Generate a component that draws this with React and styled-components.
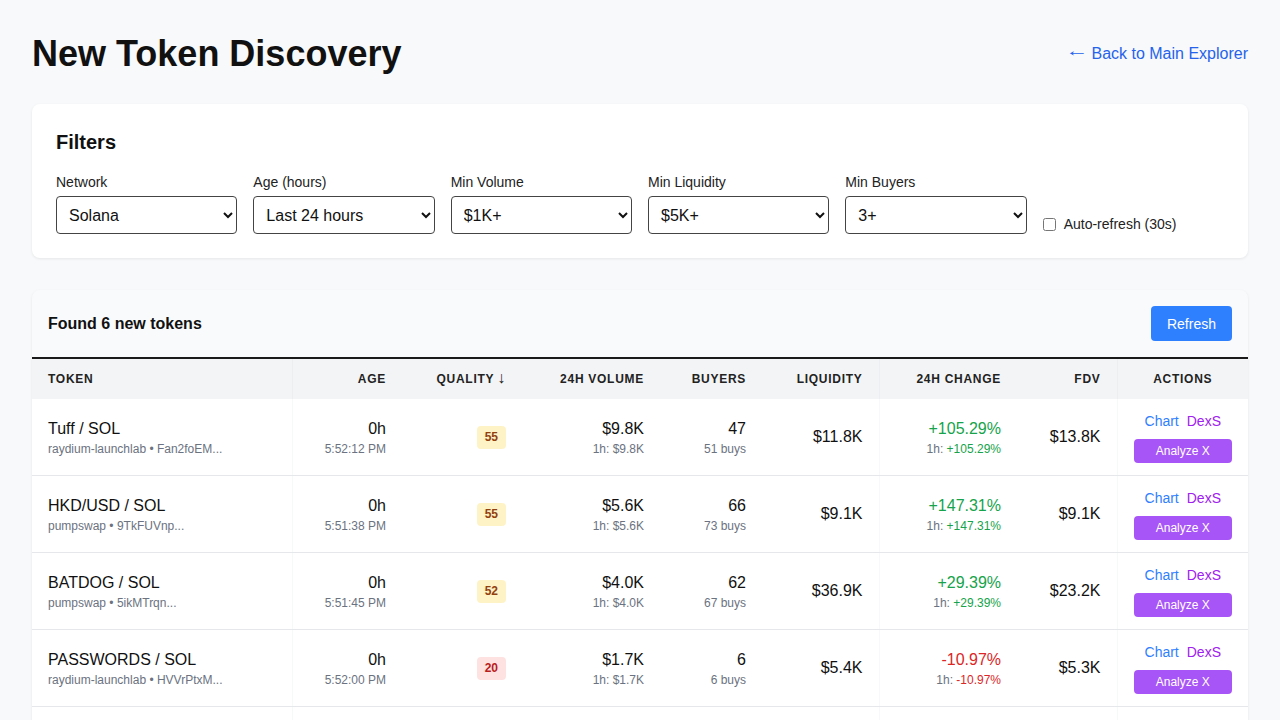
import React from "react";
import styled, { createGlobalStyle } from "styled-components";

const GlobalStyle = createGlobalStyle`
  body {
    margin: 0;
    background: #f8f9fb;
    font-family: "Liberation Sans", Arial, sans-serif;
    color: #111;
  }
`;

const Page = styled.div`
  padding: 32px;
`;

const Header = styled.div`
  display: flex;
  align-items: center;
  justify-content: space-between;
  margin-bottom: 28px;
`;

const Title = styled.h1`
  margin: 0;
  font-size: 36px;
  line-height: 44px;
  font-weight: 700;
  color: #111;
`;

const BackLink = styled.a`
  color: #2563eb;
  font-size: 16px;
  text-decoration: none;
  display: flex;
  align-items: center;
`;

const Arrow = styled.span`
  font-size: 16px;
  line-height: 16px;
  transform: translateY(-3px) scaleX(1.45);
  display: inline-block;
  margin-right: 6px;
`;

const Card = styled.div`
  background: #fff;
  border-radius: 8px;
  box-shadow: 0 1px 3px rgba(0, 0, 0, 0.08);
  padding: 24px;
  margin-bottom: 32px;
`;

const CardTitle = styled.h2`
  margin: 0 0 16px;
  font-size: 20px;
  line-height: 28px;
  font-weight: 700;
`;

const FilterGrid = styled.div`
  display: grid;
  grid-template-columns: repeat(6, 1fr);
  gap: 16px;
  align-items: end;
`;

const Field = styled.label`
  display: flex;
  flex-direction: column;
  gap: 4px;
  font-size: 14px;
  line-height: 20px;
  color: #222;
`;

const Select = styled.select`
  height: 38px;
  padding: 0 8px;
  font-family: inherit;
  font-size: 16px;
  color: #111;
  background: #fff;
  border: 1px solid #444;
  border-radius: 4px;
`;

const Check = styled.label`
  display: flex;
  align-items: center;
  gap: 8px;
  font-size: 14px;
  line-height: 20px;
  color: #222;
  input { margin: 0; width: 13px; height: 13px; }
`;

const Results = styled.div`
  background: #f9fafb;
  border-radius: 8px;
  box-shadow: 0 1px 3px rgba(0, 0, 0, 0.08);
  overflow: hidden;
`;

const ResultsHead = styled.div`
  display: flex;
  align-items: center;
  justify-content: space-between;
  padding: 16px;
  border-bottom: 2px solid #1a1a1a;
`;

const ResultsTitle = styled.h3`
  margin: 0;
  font-size: 16px;
  font-weight: 700;
`;

const RefreshButton = styled.button`
  background: #2f80ff;
  color: #fff;
  border: none;
  border-radius: 4px;
  font-family: inherit;
  font-size: 14px;
  height: 35px;
  padding: 0 16px;
`;

const Table = styled.table`
  width: 100%;
  border-collapse: collapse;
  table-layout: fixed;
`;

const Th = styled.th`
  background: #f3f4f6;
  height: 40px;
  padding: 0 16px;
  font-size: 12px;
  font-weight: 700;
  letter-spacing: 0.06em;
  text-transform: uppercase;
  color: #222;
  text-align: ${(p) => p.$align || "right"};
  border-left: ${(p) => (p.$sep ? "1px solid #eceef1" : "none")};
`;

const SortArrow = styled.span`
  font-size: 16px;
  line-height: 12px;
  font-weight: 400;
  margin-left: 3px;
`;

const Td = styled.td`
  background: #fff;
  padding: 12px 16px;
  text-align: ${(p) => p.$align || "right"};
  vertical-align: middle;
  border-bottom: 1px solid #e5e7eb;
  border-left: ${(p) => (p.$sep ? "1px solid #f7f8f9" : "none")};
  font-size: 16px;
`;

const Main = styled.div`
  font-size: 16px;
  line-height: 24px;
  color: ${(p) => p.$color || "#111"};
`;

const Sub = styled.div`
  font-size: 12px;
  line-height: 16px;
  color: #6b7280;
  white-space: nowrap;
`;

const Delta = styled.span`
  color: ${(p) => p.$color};
`;

const Badge = styled.span`
  display: inline-block;
  padding: 4px 8px;
  border-radius: 4px;
  font-size: 12px;
  line-height: 15px;
  font-weight: 700;
  background: ${(p) => (p.$low ? "#fee2e2" : "#fef3c7")};
  color: ${(p) => (p.$low ? "#b91c1c" : "#92400e")};
`;

const LinkRow = styled.div`
  display: flex;
  justify-content: center;
  gap: 8px;
  font-size: 14px;
  line-height: 20px;
  margin-bottom: 8px;
`;

const ActionLink = styled.a`
  color: ${(p) => p.$color};
  text-decoration: none;
`;

const AnalyzeButton = styled.button`
  display: block;
  width: 100%;
  height: 24px;
  background: #a855f7;
  color: #fff;
  border: none;
  border-radius: 4px;
  font-family: inherit;
  font-size: 12px;
`;

const columns = [
  { label: "Token", width: 260, align: "left" },
  { label: "Age", width: 110, sep: true },
  { label: "Quality", width: 120, sort: true },
  { label: "24h Volume", width: 138 },
  { label: "Buyers", width: 102 },
  { label: "Liquidity", width: 117 },
  { label: "24h Change", width: 138, sep: true },
  { label: "FDV", width: 100 },
  { label: "Actions", width: 131, align: "center", sep: true },
];

const tokens = [
  { name: "Tuff / SOL", dex: "raydium-launchlab", addr: "Fan2foEM...", time: "5:52:12 PM", q: 55, vol: "$9.8K", buyers: 47, buys: 51, liq: "$11.8K", change: "+105.29%", fdv: "$13.8K" },
  { name: "HKD/USD / SOL", dex: "pumpswap", addr: "9TkFUVnp...", time: "5:51:38 PM", q: 55, vol: "$5.6K", buyers: 66, buys: 73, liq: "$9.1K", change: "+147.31%", fdv: "$9.1K" },
  { name: "BATDOG / SOL", dex: "pumpswap", addr: "5ikMTrqn...", time: "5:51:45 PM", q: 52, vol: "$4.0K", buyers: 62, buys: 67, liq: "$36.9K", change: "+29.39%", fdv: "$23.2K" },
  { name: "PASSWORDS / SOL", dex: "raydium-launchlab", addr: "HVVrPtxM...", time: "5:52:00 PM", q: 20, vol: "$1.7K", buyers: 6, buys: 6, liq: "$5.4K", change: "-10.97%", fdv: "$5.3K" },
  { name: "GRIND / SOL", dex: "pumpswap", addr: "7qLmXcBv...", time: "5:51:20 PM", q: 18, vol: "$1.2K", buyers: 4, buys: 5, liq: "$6.2K", change: "-4.12%", fdv: "$6.0K" },
  { name: "ORBIT / SOL", dex: "raydium-launchlab", addr: "Bz4kQeTn...", time: "5:50:58 PM", q: 15, vol: "$1.1K", buyers: 3, buys: 4, liq: "$5.1K", change: "+2.05%", fdv: "$5.0K" },
];

const filters = [
  { label: "Network", value: "Solana" },
  { label: "Age (hours)", value: "Last 24 hours" },
  { label: "Min Volume", value: "$1K+" },
  { label: "Min Liquidity", value: "$5K+" },
  { label: "Min Buyers", value: "3+" },
];

export default function App() {
  return (
    <>
      <GlobalStyle />
      <Page>
        <Header>
          <Title>New Token Discovery</Title>
          <BackLink href="#">
            <Arrow>←</Arrow>Back to Main Explorer
          </BackLink>
        </Header>

        <Card>
          <CardTitle>Filters</CardTitle>
          <FilterGrid>
            {filters.map((f) => (
              <Field key={f.label}>
                {f.label}
                <Select defaultValue={f.value}>
                  <option>{f.value}</option>
                </Select>
              </Field>
            ))}
            <Check>
              <input type="checkbox" />
              Auto-refresh (30s)
            </Check>
          </FilterGrid>
        </Card>

        <Results>
          <ResultsHead>
            <ResultsTitle>Found 6 new tokens</ResultsTitle>
            <RefreshButton>Refresh</RefreshButton>
          </ResultsHead>
          <Table>
            <colgroup>
              {columns.map((c) => (
                <col key={c.label} style={{ width: c.width }} />
              ))}
            </colgroup>
            <thead>
              <tr>
                {columns.map((c) => (
                  <Th key={c.label} $align={c.align} $sep={c.sep}>
                    {c.label}
                    {c.sort && <SortArrow>↓</SortArrow>}
                  </Th>
                ))}
              </tr>
            </thead>
            <tbody>
              {tokens.map((t) => {
                const up = t.change.startsWith("+");
                const color = up ? "#16a34a" : "#dc2626";
                return (
                  <tr key={t.name}>
                    <Td $align="left">
                      <Main>{t.name}</Main>
                      <Sub>
                        {t.dex} • {t.addr}
                      </Sub>
                    </Td>
                    <Td $sep>
                      <Main>0h</Main>
                      <Sub>{t.time}</Sub>
                    </Td>
                    <Td>
                      <Badge $low={t.q < 40}>{t.q}</Badge>
                    </Td>
                    <Td>
                      <Main>{t.vol}</Main>
                      <Sub>1h: {t.vol}</Sub>
                    </Td>
                    <Td>
                      <Main>{t.buyers}</Main>
                      <Sub>{t.buys} buys</Sub>
                    </Td>
                    <Td>
                      <Main>{t.liq}</Main>
                    </Td>
                    <Td $sep>
                      <Main $color={color}>{t.change}</Main>
                      <Sub>
                        1h: <Delta $color={color}>{t.change}</Delta>
                      </Sub>
                    </Td>
                    <Td>
                      <Main>{t.fdv}</Main>
                    </Td>
                    <Td $sep>
                      <LinkRow>
                        <ActionLink href="#" $color="#2f80ff">Chart</ActionLink>
                        <ActionLink href="#" $color="#a020f0">DexS</ActionLink>
                      </LinkRow>
                      <AnalyzeButton>Analyze X</AnalyzeButton>
                    </Td>
                  </tr>
                );
              })}
            </tbody>
          </Table>
        </Results>
      </Page>
    </>
  );
}
